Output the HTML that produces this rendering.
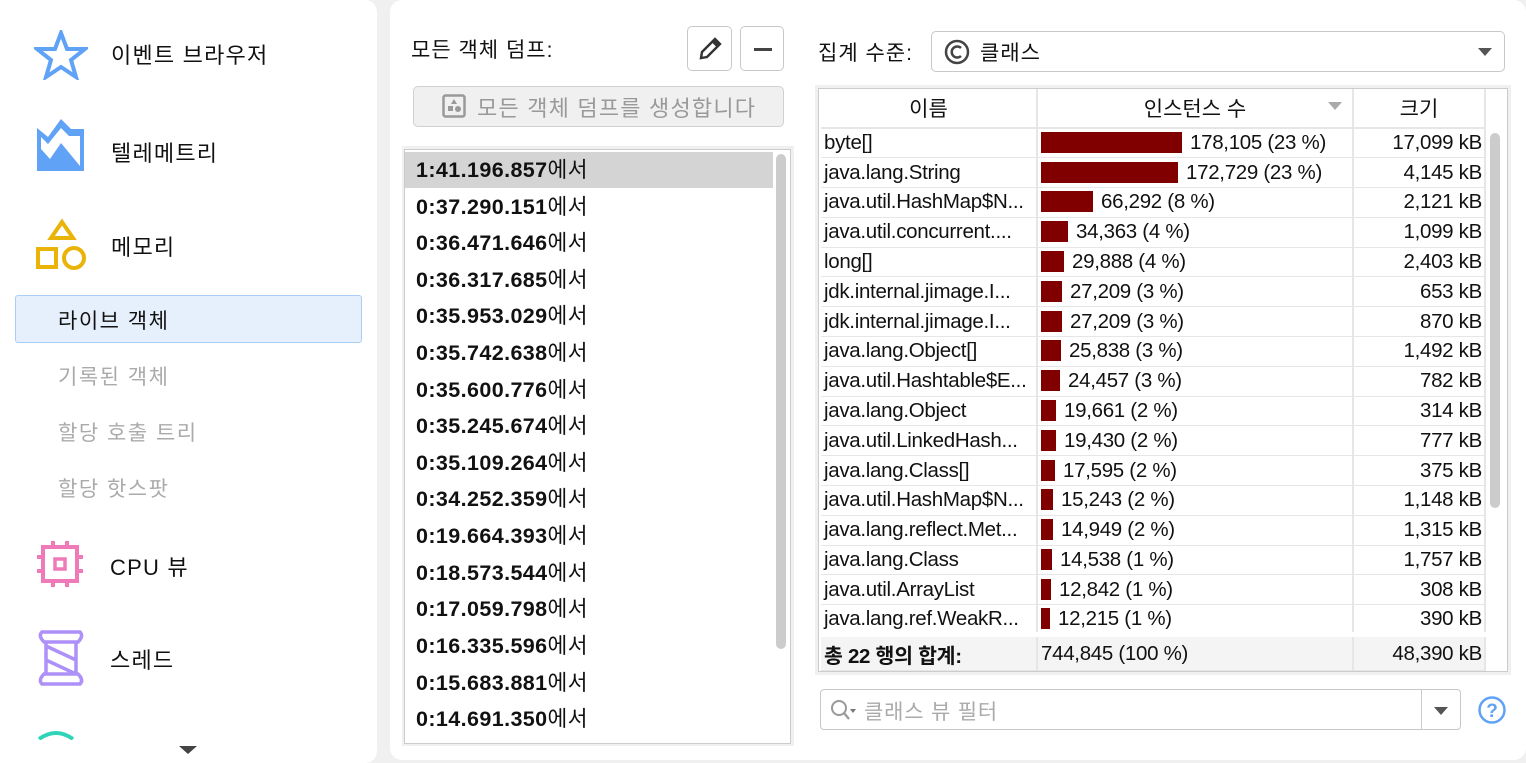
<!DOCTYPE html><html><head><meta charset="utf-8"><style>
*{box-sizing:border-box;margin:0;padding:0}
body{width:1526px;height:763px;background:#f0f0f0;font-family:"Liberation Sans","Noto Sans CJK KR",sans-serif;position:relative;overflow:hidden;color:#111}
.p{position:absolute;background:#fff;border-radius:12px}
.a{position:absolute;white-space:nowrap}
.nav{font-size:22px;letter-spacing:1.2px}
.sub{font-size:21px;color:#aaa;letter-spacing:1.5px}
.lst div{position:absolute;left:11px;font-size:21.5px;height:36px;line-height:36px;letter-spacing:0.4px}
.lst b{font-weight:bold}
table{border-collapse:collapse;position:absolute;left:821px;top:89px;font-size:20.5px;font-family:"Liberation Sans","Noto Sans CJK KR",sans-serif;table-layout:fixed}
td{height:29.8px;border-bottom:1px solid #e6e6e6;border-right:2px solid #e6e6e6;padding:0 3px;white-space:nowrap;overflow:hidden;letter-spacing:-0.3px}
td.n{width:216px;max-width:216px}
td.i{width:316px}
td.s{width:132px;text-align:right;padding-right:2px}
.bar{display:inline-block;height:21px;background:#800000;vertical-align:-4px;margin-right:8px}
th{height:39px;font-weight:normal;font-size:21px;border-right:2px solid #e6e6e6;border-bottom:2px solid #e6e6e6}
</style></head><body>
<div class="p" style="left:0;top:0;width:377px;height:763px;border-radius:0 12px 12px 0"></div>
<div class="p" style="left:390px;top:0;width:1136px;height:760px"></div>

<svg class="a" style="left:34px;top:30px" width="54" height="50" viewBox="0 0 54 50"><polygon points="27,3 33,19 51,19 37,30 42,47 27,37 12,47 17,30 3,19 21,19" fill="none" stroke="#5fa2f6" stroke-width="4"/></svg>
<div class="a nav" style="left:111px;top:38px">이벤트 브라우저</div>
<svg class="a" style="left:36px;top:106px" width="50" height="66" viewBox="0 0 50 66"><path d="M1,65V22L12,31L25,13L35,23H48V65Z" fill="#5fa2f6"/><path d="M5,31L12,38L25,22L33,30H44V60L25,37L14,53L5,43Z" fill="#fff"/></svg>
<div class="a nav" style="left:111px;top:136px">텔레메트리</div>
<svg class="a" style="left:36px;top:218px" width="52" height="54" viewBox="0 0 52 54"><polygon points="26,4 37,20 15,20" fill="none" stroke="#e9b308" stroke-width="4"/><rect x="2" y="31" width="18" height="18" fill="none" stroke="#e9b308" stroke-width="4"/><circle cx="38" cy="40" r="10" fill="none" stroke="#e9b308" stroke-width="4"/></svg>
<div class="a nav" style="left:111px;top:230px">메모리</div>
<div class="a" style="left:15px;top:295px;width:347px;height:48px;background:#e6f0fc;border:1px solid #a9cdf5;border-radius:3px"></div>
<div class="a sub" style="left:58px;top:305px;color:#111">라이브 객체</div>
<div class="a sub" style="left:58px;top:361px">기록된 객체</div>
<div class="a sub" style="left:58px;top:417px">할당 호출 트리</div>
<div class="a sub" style="left:58px;top:473px">할당 핫스팟</div>
<svg class="a" style="left:36px;top:540px" width="48" height="48" viewBox="0 0 48 48"><rect x="7" y="7" width="34" height="34" fill="none" stroke="#f07ab8" stroke-width="4"/><rect x="19" y="19" width="10" height="10" fill="none" stroke="#f07ab8" stroke-width="3.5"/><path d="M17,1V7M31,1V7M17,41V47M31,41V47M1,17H7M1,31H7M41,17H47M41,31H47" stroke="#f07ab8" stroke-width="4"/></svg>
<div class="a nav" style="left:110px;top:550px">CPU 뷰</div>
<svg class="a" style="left:36px;top:630px" width="50" height="56" viewBox="0 0 50 56"><path d="M6,2H44Q48,6 42,12H8Q2,6 6,2ZM8,44H42Q48,50 44,54H6Q2,50 8,44Z" fill="none" stroke="#ad90f8" stroke-width="3.5"/><path d="M10,12V44M40,12V44M10,16L40,30M10,30L40,44" stroke="#ad90f8" stroke-width="3.5"/></svg>
<div class="a nav" style="left:110px;top:643px">스레드</div>
<svg class="a" style="left:36px;top:730px" width="40" height="10"><path d="M3,9Q20,-3 37,9" fill="none" stroke="#2fd4b8" stroke-width="4"/></svg>
<div class="a" style="left:179px;top:746px;border-left:9px solid transparent;border-right:9px solid transparent;border-top:8px solid #444"></div>

<div class="a" style="left:411px;top:34px;font-size:21px;letter-spacing:1px">모든 객체 덤프:</div>
<div class="a" style="left:687px;top:26px;width:45px;height:45px;border:1px solid #c8c8c8;border-radius:5px"><svg width="43" height="43"><path d="M13,31L14,25L27,12L32,17L19,30Z" fill="none" stroke="#333" stroke-width="2.4"/><path d="M25,14L30,19" stroke="#333" stroke-width="3.5"/></svg></div>
<div class="a" style="left:740px;top:26px;width:44px;height:45px;border:1px solid #c8c8c8;border-radius:5px"><div style="position:absolute;left:13px;top:21px;width:18px;height:2.5px;background:#444"></div></div>
<div class="a" style="left:413px;top:86px;width:371px;height:41px;background:#f0f0f0;border:1px solid #d0d0d0;border-radius:5px"></div>
<svg class="a" style="left:442px;top:94px" width="24" height="24"><rect x="1.5" y="1.5" width="21" height="21" rx="2" fill="none" stroke="#999" stroke-width="2.5"/><polygon points="12,5 15,10 9,10" fill="#999"/><rect x="6" y="12" width="5" height="5" fill="#999"/><circle cx="16" cy="15" r="3" fill="#999"/></svg>
<div class="a" style="left:477px;top:91px;font-size:22px;color:#999;letter-spacing:1.2px">모든 객체 덤프를 생성합니다</div>
<div class="a" style="left:402px;top:146px;width:392px;height:600px;background:#f0f0f0"></div>
<div class="a lst" style="left:404px;top:149px;width:387px;height:595px;background:#fff;border:1px solid #ccc;overflow:hidden">
<div style="left:0;width:368px;top:2px;background:#d4d4d4;padding-left:11px"><b>1:41.196.857</b>에서</div>
<div style="top:39px"><b>0:37.290.151</b>에서</div>
<div style="top:75px"><b>0:36.471.646</b>에서</div>
<div style="top:112px"><b>0:36.317.685</b>에서</div>
<div style="top:148px"><b>0:35.953.029</b>에서</div>
<div style="top:185px"><b>0:35.742.638</b>에서</div>
<div style="top:222px"><b>0:35.600.776</b>에서</div>
<div style="top:258px"><b>0:35.245.674</b>에서</div>
<div style="top:295px"><b>0:35.109.264</b>에서</div>
<div style="top:331px"><b>0:34.252.359</b>에서</div>
<div style="top:368px"><b>0:19.664.393</b>에서</div>
<div style="top:405px"><b>0:18.573.544</b>에서</div>
<div style="top:441px"><b>0:17.059.798</b>에서</div>
<div style="top:478px"><b>0:16.335.596</b>에서</div>
<div style="top:515px"><b>0:15.683.881</b>에서</div>
<div style="top:551px"><b>0:14.691.350</b>에서</div>
<div style="left:371px;top:4px;width:10px;height:495px;background:#ccc;border-radius:5px"></div>
</div>

<div class="a" style="left:818px;top:37px;font-size:21px;letter-spacing:1px">집계 수준:</div>
<div class="a" style="left:931px;top:31px;width:574px;height:41px;border:1px solid #c8c8c8;border-radius:5px"></div>
<svg class="a" style="left:944px;top:39px" width="26" height="26"><circle cx="13" cy="13" r="11" fill="none" stroke="#444" stroke-width="2.5"/><path d="M17,9A5.5,5.5 0 1 0 17,17" fill="none" stroke="#444" stroke-width="2.5"/></svg>
<div class="a" style="left:980px;top:37px;font-size:21px;letter-spacing:1px">클래스</div>
<div class="a" style="left:1478px;top:48px;border-left:7px solid transparent;border-right:7px solid transparent;border-top:8px solid #555"></div>

<div class="a" style="left:815px;top:85px;width:696px;height:590px;background:#f0f0f0"></div>
<div class="a" style="left:818px;top:88px;width:690px;height:584px;background:#fff;border:1px solid #ccc"></div>
<table>
<tr><th style="width:216px">이름</th><th style="position:relative;width:316px">인스턴스 수<span style="position:absolute;right:10px;top:13px;border-left:7px solid transparent;border-right:7px solid transparent;border-top:8px solid #aaa"></span></th><th style="width:132px">크기</th></tr>
<tr><td class="n">byte[]</td><td class="i"><span class="bar" style="width:141px"></span>178,105 (23 %)</td><td class="s">17,099 kB</td></tr>
<tr><td class="n">java.lang.String</td><td class="i"><span class="bar" style="width:137px"></span>172,729 (23 %)</td><td class="s">4,145 kB</td></tr>
<tr><td class="n">java.util.HashMap$N...</td><td class="i"><span class="bar" style="width:52px"></span>66,292 (8 %)</td><td class="s">2,121 kB</td></tr>
<tr><td class="n">java.util.concurrent....</td><td class="i"><span class="bar" style="width:27px"></span>34,363 (4 %)</td><td class="s">1,099 kB</td></tr>
<tr><td class="n">long[]</td><td class="i"><span class="bar" style="width:23px"></span>29,888 (4 %)</td><td class="s">2,403 kB</td></tr>
<tr><td class="n">jdk.internal.jimage.I...</td><td class="i"><span class="bar" style="width:21px"></span>27,209 (3 %)</td><td class="s">653 kB</td></tr>
<tr><td class="n">jdk.internal.jimage.I...</td><td class="i"><span class="bar" style="width:21px"></span>27,209 (3 %)</td><td class="s">870 kB</td></tr>
<tr><td class="n">java.lang.Object[]</td><td class="i"><span class="bar" style="width:20px"></span>25,838 (3 %)</td><td class="s">1,492 kB</td></tr>
<tr><td class="n">java.util.Hashtable$E...</td><td class="i"><span class="bar" style="width:19px"></span>24,457 (3 %)</td><td class="s">782 kB</td></tr>
<tr><td class="n">java.lang.Object</td><td class="i"><span class="bar" style="width:15px"></span>19,661 (2 %)</td><td class="s">314 kB</td></tr>
<tr><td class="n">java.util.LinkedHash...</td><td class="i"><span class="bar" style="width:15px"></span>19,430 (2 %)</td><td class="s">777 kB</td></tr>
<tr><td class="n">java.lang.Class[]</td><td class="i"><span class="bar" style="width:14px"></span>17,595 (2 %)</td><td class="s">375 kB</td></tr>
<tr><td class="n">java.util.HashMap$N...</td><td class="i"><span class="bar" style="width:12px"></span>15,243 (2 %)</td><td class="s">1,148 kB</td></tr>
<tr><td class="n">java.lang.reflect.Met...</td><td class="i"><span class="bar" style="width:12px"></span>14,949 (2 %)</td><td class="s">1,315 kB</td></tr>
<tr><td class="n">java.lang.Class</td><td class="i"><span class="bar" style="width:11px"></span>14,538 (1 %)</td><td class="s">1,757 kB</td></tr>
<tr><td class="n">java.util.ArrayList</td><td class="i"><span class="bar" style="width:10px"></span>12,842 (1 %)</td><td class="s">308 kB</td></tr>
<tr><td class="n">java.lang.ref.WeakR...</td><td class="i"><span class="bar" style="width:9px"></span>12,215 (1 %)</td><td class="s">390 kB</td></tr>
<tr style="background:#f4f4f4"><td class="n" style="height:36px;border-top:5px solid #fff"><b>총 22 행의 합계:</b></td><td class="i" style="border-top:5px solid #fff">744,845 (100 %)</td><td class="s" style="border-top:5px solid #fff">48,390 kB</td></tr>
</table>
<div class="a" style="left:1490px;top:133px;width:10px;height:375px;background:#ccc;border-radius:5px"></div>

<div class="a" style="left:820px;top:689px;width:641px;height:41px;border:1px solid #c8c8c8;border-radius:4px"></div>
<div class="a" style="left:1421px;top:690px;width:1px;height:39px;background:#ccc"></div>
<div class="a" style="left:1434px;top:707px;border-left:7px solid transparent;border-right:7px solid transparent;border-top:8px solid #555"></div>
<svg class="a" style="left:829px;top:698px" width="32" height="24"><circle cx="10" cy="10" r="7" fill="none" stroke="#999" stroke-width="2"/><path d="M15,15L20,21" stroke="#999" stroke-width="2.2"/><polygon points="21,11 27,11 24,15" fill="#777"/></svg>
<div class="a" style="left:864px;top:696px;font-size:21px;color:#aaa;letter-spacing:0.8px">클래스 뷰 필터</div>
<svg class="a" style="left:1477px;top:695px" width="30" height="30"><circle cx="15" cy="15" r="12.5" fill="none" stroke="#5fa2f6" stroke-width="2.5"/><text x="15" y="22" text-anchor="middle" font-size="19" font-weight="bold" fill="#5fa2f6" font-family="Liberation Sans">?</text></svg>
</body></html>
